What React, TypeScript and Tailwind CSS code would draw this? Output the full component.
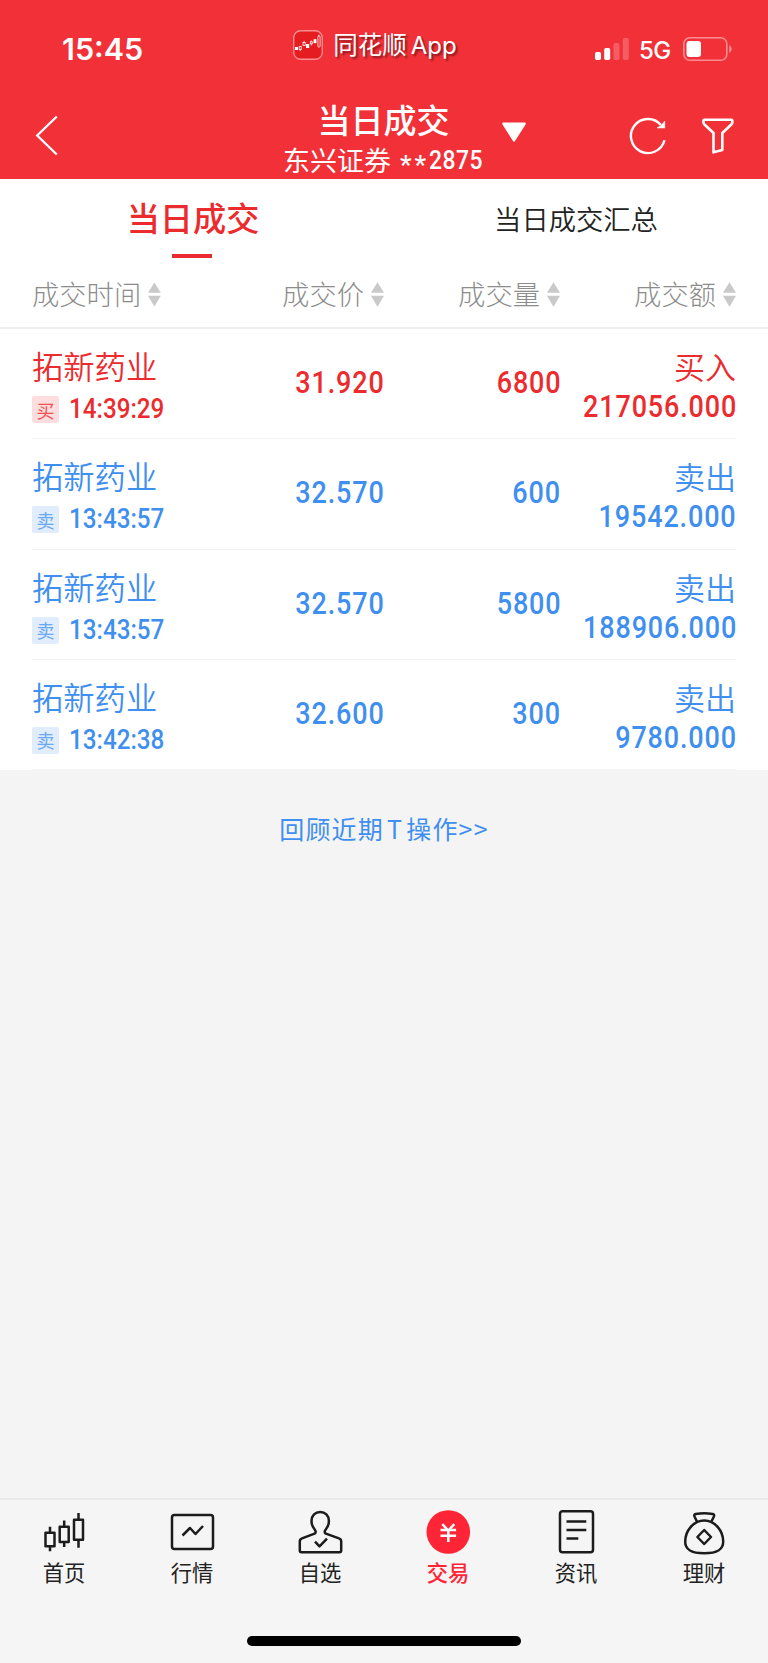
import type { ReactNode } from "react";
import clsx from "clsx";

type Trade = {
  name: string;
  side: "buy" | "sell";
  time: string;
  price: string;
  volume: string;
  amount: string;
};

const trades: Trade[] = [
  { name: "拓新药业", side: "buy", time: "14:39:29", price: "31.920", volume: "6800", amount: "217056.000" },
  { name: "拓新药业", side: "sell", time: "13:43:57", price: "32.570", volume: "600", amount: "19542.000" },
  { name: "拓新药业", side: "sell", time: "13:43:57", price: "32.570", volume: "5800", amount: "188906.000" },
  { name: "拓新药业", side: "sell", time: "13:42:38", price: "32.600", volume: "300", amount: "9780.000" },
];

const columns = ["成交时间", "成交价", "成交量", "成交额"];

function AppBadge() {
  return (
    <svg width="30" height="30" viewBox="0 0 30 30" fill="none">
      <rect x="0.75" y="0.75" width="28.5" height="28.5" rx="7" fill="#e51c20" stroke="#f98f93" strokeWidth="1.3" />
      <g fill="#fff">
        <rect x="2" y="17" width="3" height="3" />
        <rect x="13" y="14" width="3.2" height="4" />
        <rect x="20.6" y="9.2" width="2.8" height="4" />
      </g>
      <g stroke="#fff" strokeWidth="0.8">
        <rect x="6.2" y="16.6" width="2" height="3" />
        <rect x="10" y="12.4" width="2.2" height="3" />
        <path d="M11.1 11v1.4M7.2 19.6v1.6M18.3 10.6v1.3M18.3 14v1.4M25.9 4.6v1.4" />
        <rect x="17.3" y="11.8" width="2" height="2" />
        <rect x="24.9" y="6" width="2.2" height="11" rx="0.8" />
      </g>
    </svg>
  );
}

function StatusBar() {
  return (
    <div className="grid h-[97px] grid-cols-[230px_1fr_230px]">
      <div className="pt-[29px] pl-[62px] font-['Inter'] text-[30.500px] leading-10 font-semibold">15:45</div>
      <div className="flex items-start justify-center pt-[26px] pr-[18px]">
        <div className="mt-1 mr-2.5">
          <AppBadge />
        </div>
        <span className="text-[24.5px] leading-9 whitespace-nowrap [text-shadow:2px_2px_2px_rgba(0,0,0,0.45)]">
          同花顺<span className="ml-1 font-['Inter'] text-[24px]">App</span>
        </span>
      </div>
      <div className="flex items-start pt-[37px] pl-[57px]">
        <svg className="shrink-0" width="34" height="24" viewBox="0 0 34 24" fill="#fff">
          <rect x="0" y="15" width="6" height="8" rx="1.8" />
          <rect x="9.2" y="11" width="6" height="12" rx="1.8" />
          <rect x="18.5" y="6" width="6" height="17" rx="1.8" opacity="0.22" />
          <rect x="27.8" y="1" width="6" height="22" rx="1.8" opacity="0.22" />
        </svg>
        <span className="ml-2.5 w-[33px] font-['Inter'] text-[24px] leading-[27px] font-medium tracking-[-0.5px]">5G</span>
        <svg className="ml-[11px] shrink-0" width="50" height="24" viewBox="0 0 50 24" fill="none">
          <rect x="0.8" y="0.8" width="43" height="22.4" rx="6" stroke="#fff" strokeOpacity="0.45" strokeWidth="1.6" />
          <rect x="3.5" y="4" width="14.5" height="16" rx="3" fill="#fff" />
          <path d="M46.3 8.2c3 1.4 3 6.200 0 7.600z" fill="#fff" fillOpacity="0.5" />
        </svg>
      </div>
    </div>
  );
}

function TitleBar() {
  return (
    <div className="flex h-[82px] items-start">
      <div className="w-[283px] pt-[18px] pl-[35px]">
        <svg width="24" height="41" viewBox="0 0 24 41" fill="none" stroke="#fff" strokeWidth="2.300">
          <path d="M21.800 1.500 2.200 20.500 21.800 39.500" />
        </svg>
      </div>
      <div className="w-[201px] whitespace-nowrap">
        <h1 className="-mt-px h-12 text-center text-[33px] leading-[46px] font-medium">当日成交</h1>
        <p className="-mt-0.5 flex h-9 items-center text-[27px] leading-9">
          东兴证券
          <span className="mt-2.5 ml-[9px] inline-block w-[29px] font-['Roboto'] text-[26px] leading-9 font-medium tracking-[3px]">**</span>
          <span className="inline-block origin-left scale-x-[0.88] font-['Roboto'] text-[26px] font-medium tracking-[0.600px]">2875</span>
        </p>
      </div>
      <svg className="mt-[25px] ml-[18px]" width="24" height="21" viewBox="0 0 24 21" fill="#fff">
        <path d="M1.500 0.500h21c1.200 0 1.600 1.300.9 2.300L13 19c-.6.9-1.400.9-2 0L.6 2.800C0 1.800.3.500 1.500.500z" />
      </svg>
      <svg className="mt-[19px] ml-[103px]" width="40" height="41" viewBox="0 0 40 41" fill="none" stroke="#fff" strokeWidth="2.400">
        <path d="M35.500 24.300A17.050 17.050 0 1 1 32 9" />
        <path d="M35.800 5V12h-7.800l4-2.500z" fill="#fff" strokeWidth="0.500" />
      </svg>
      <svg className="mt-[20px] ml-[31px]" width="35" height="40" viewBox="0 0 35 40" fill="none" stroke="#fff" strokeWidth="2.600" strokeLinejoin="round">
        <path d="M4.300 2.800h27.200q.800 0 .800.800v2q0 .9-.7 1.600L22.300 16v17l-8.800 2.300V16L4.200 7.200q-.7-.7-.7-1.600v-2q0-.8.800-.8z" />
      </svg>
    </div>
  );
}

function SortArrows() {
  return (
    <svg width="13" height="25" viewBox="0 0 13 25" fill="#c9c9c9">
      <path d="M6.500 0.300 13 10.800H0z" />
      <path d="M6.500 24.700 13 13.700H0z" />
    </svg>
  );
}

// Narrow DIN-like figures, right aligned in their column
function Figure({ children }: { children: ReactNode }) {
  return (
    <div className="flex justify-end">
      <span className="-mr-px origin-right scale-x-[0.87] font-['Roboto'] text-[31px] leading-10 font-medium tracking-[1px]">
        {children}
      </span>
    </div>
  );
}

function TradeRow({ trade }: { trade: Trade }) {
  const buy = trade.side === "buy";
  return (
    <div
      className={clsx(
        "mx-8 grid h-[110.25px] grid-cols-[176px_176px_176px_176px] border-b border-[#f3f3f3]",
        buy ? "text-[#ec2b2e]" : "text-[#3f8ff0]"
      )}
    >
      <div className="pt-[15px]">
        <div className="text-[31.300px] leading-[44px] font-[350] whitespace-nowrap">{trade.name}</div>
        <div className="mt-2 flex items-start">
          <span
            className={clsx(
              "flex h-[27px] w-[27px] items-center justify-center rounded-[2px] text-[18px] leading-none",
              buy ? "bg-[#fddddd] text-[#ef5052]" : "bg-[#e1edfc] text-[#6aa8f3]"
            )}
          >
            {buy ? "买" : "卖"}
          </span>
          <span className="-mt-px ml-2.5 inline-block origin-left scale-x-[0.88] font-['Roboto'] text-[27.500px] leading-[27px] font-medium">
            {trade.time}
          </span>
        </div>
      </div>
      <div className="pt-[34px]">
        <Figure>{trade.price}</Figure>
      </div>
      <div className="pt-[34px]">
        <Figure>{trade.volume}</Figure>
      </div>
      <div className="pt-[15px] text-right">
        <div className="text-[31px] leading-[44px] font-[350]">{buy ? "买入" : "卖出"}</div>
        <div className="-mt-px">
          <Figure>{trade.amount}</Figure>
        </div>
      </div>
    </div>
  );
}

function NavIcon({ children }: { children: ReactNode }) {
  return (
    <svg width="48" height="48" viewBox="0 0 48 48" fill="none" stroke="#1c1c1c" strokeWidth="2.500" strokeLinejoin="round">
      {children}
    </svg>
  );
}

const tabs = [
  {
    label: "首页",
    icon: (
      <NavIcon>
        <path d="M5.500 24.800h9v13.400h-9zM19.700 18.800h9v15.200h-9zM34 11.800h9v20h-9z" />
        <path d="M10 18.800v6M10 38.200v5M24.200 12.500v6.300M24.200 34v5M38.500 5v6.800M38.500 31.800v8" />
      </NavIcon>
    ),
  },
  {
    label: "行情",
    icon: (
      <NavIcon>
        <rect x="4" y="7" width="41" height="34" rx="2.500" />
        <path d="M14.500 27.500 22 20l5.500 6 7.500-8" />
      </NavIcon>
    ),
  },
  {
    label: "自选",
    icon: (
      <NavIcon>
        <path d="M19.200 25.300c1-1.500.5-2.700-.7-4.100-2.500-3-3-5.200-3-8.200C15.500 7.500 19.300 4 24.200 4s8.700 3.500 8.700 9c0 3-.6 5.200-3 8.200-1.200 1.400-1.700 2.600-.7 4.100L43 30.400c1.500.5 2.200 1.300 2.200 2.800v9.300q0 1.700-1.700 1.700h-38q-1.700 0-1.700-1.700v-9.300c0-1.500.7-2.300 2.200-2.800z" />
        <path d="M19 33.600l4.500 4.800 7.500-7.800" />
      </NavIcon>
    ),
  },
  {
    label: "交易",
    active: true,
    icon: (
      <svg width="48" height="48" viewBox="0 0 48 48" fill="none">
        <circle cx="24.300" cy="24" r="21.800" fill="#ff2436" />
        <path d="M18.300 16.200l6 6.300 6-6.300M16.500 22h15.600M16.500 27.800h15.600M24.300 22v12" stroke="#fff" strokeWidth="2.500" />
      </svg>
    ),
  },
  {
    label: "资讯",
    icon: (
      <NavIcon>
        <rect x="8" y="3.200" width="33" height="41" rx="2.500" />
        <path d="M14.500 13.500h19.800M14.500 22h19.800M14.500 30.500h11.800" />
      </NavIcon>
    ),
  },
  {
    label: "理财",
    icon: (
      <NavIcon>
        <path d="M17.200 14 14.500 8.500q-.8-2 1.200-2.500 8.500-1.600 17 0 2 .5 1.200 2.500L31.200 14" />
        <path d="M24.200 12.500c11 0 19 10.500 19 21 0 8.500-6 11.800-19 11.800s-19-3.300-19-11.800c0-10.500 8-21 19-21z" />
        <path d="M24.200 22 31 29l-6.800 7-6.800-7z" />
      </NavIcon>
    ),
  },
];

export default function App() {
  return (
    <div className="flex h-[1663px] w-[768px] flex-col overflow-hidden bg-[#f4f4f4] font-['Noto_Sans_CJK_SC',sans-serif]">
      <header className="h-[179px] bg-[#f23038] text-white">
        <StatusBar />
        <TitleBar />
      </header>

      <main className="bg-white">
        <div className="grid h-[80px] grid-cols-2 text-center">
          <div className="flex flex-col items-center">
            <span className="mt-[14px] ml-0.5 text-[33.200px] leading-[48px] font-medium text-[#ec2b2e]">当日成交</span>
            <span className="mt-[13px] h-1 w-10 bg-[#ec2b2e]" />
          </div>
          <div className="pt-4 text-[27.300px] leading-[46px] font-[350] text-[#222]">当日成交汇总</div>
        </div>

        {/* Sortable column heads */}
        <div className="h-[70px] border-b-2 border-[#efefef] px-8 pt-[15px]">
          <div className="grid grid-cols-[129px_223px_176px_176px]">
            {columns.map((column) => (
              <div key={column} className="flex items-center justify-end gap-[7px] text-[27.300px] leading-[42px] font-light whitespace-nowrap text-[#8c8c8c]">
                <span className="-mt-0.5">{column}</span>
                <SortArrows />
              </div>
            ))}
          </div>
        </div>

        {trades.map((trade, i) => (
          <TradeRow key={i} trade={trade} />
        ))}
      </main>

      <div className="mt-[37px] text-center text-[25px] leading-[42px] tracking-[1.200px] text-[#3f8ff0]">
        回顾近期<span className="mx-[3px]">T</span>操作&gt;&gt;
      </div>

      <nav className="mt-auto h-[165px] border-t-2 border-[#e9e9e9] bg-[#f5f5f5]">
        <div className="grid grid-cols-6 pt-2">
          {tabs.map((tab) => (
            <div key={tab.label} className="flex flex-col items-center">
              {tab.icon}
              <span
                className={clsx(
                  "text-[21.300px] leading-8",
                  tab.active ? "font-medium text-[#ff2436]" : "text-[#222]"
                )}
              >
                {tab.label}
              </span>
            </div>
          ))}
        </div>
        <div className="mx-auto mt-[48px] h-2.5 w-[274px] rounded-full bg-black" />
      </nav>
    </div>
  );
}
